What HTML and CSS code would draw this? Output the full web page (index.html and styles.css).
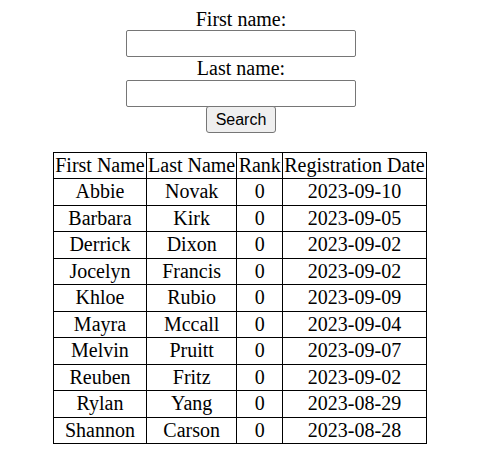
FILE: index.html
```html
<!DOCTYPE html>
<html>
<head>
<meta charset="utf-8">
<link rel="stylesheet" href="styles.css">
</head>
<body>
<form class="search-form">
  <label class="field-label" for="first">First name:</label>
  <input class="field-input" id="first" type="text">
  <label class="field-label" for="last">Last name:</label>
  <input class="field-input" id="last" type="text">
  <button class="search-btn" type="button">Search</button>
</form>
<table class="results">
  <tr><td>First Name</td><td>Last Name</td><td>Rank</td><td>Registration Date</td></tr>
  <tr><td>Abbie</td><td>Novak</td><td>0</td><td>2023-09-10</td></tr>
  <tr><td>Barbara</td><td>Kirk</td><td>0</td><td>2023-09-05</td></tr>
  <tr><td>Derrick</td><td>Dixon</td><td>0</td><td>2023-09-02</td></tr>
  <tr><td>Jocelyn</td><td>Francis</td><td>0</td><td>2023-09-02</td></tr>
  <tr><td>Khloe</td><td>Rubio</td><td>0</td><td>2023-09-09</td></tr>
  <tr><td>Mayra</td><td>Mccall</td><td>0</td><td>2023-09-04</td></tr>
  <tr><td>Melvin</td><td>Pruitt</td><td>0</td><td>2023-09-07</td></tr>
  <tr><td>Reuben</td><td>Fritz</td><td>0</td><td>2023-09-02</td></tr>
  <tr><td>Rylan</td><td>Yang</td><td>0</td><td>2023-08-29</td></tr>
  <tr><td>Shannon</td><td>Carson</td><td>0</td><td>2023-08-28</td></tr>
</table>
</body>
</html>
```
FILE: styles.css
```css
html, body {
  background: #fff;
}
body {
  margin: 8px;
  font-family: "Liberation Serif", "Times New Roman", serif;
  font-size: 20px;
  color: #000;
}
.search-form {
  display: flex;
  flex-direction: column;
  align-items: center;
  margin: 0 0 19px;
  padding-left: 2px;
}
.field-label {
  display: block;
  line-height: 22px;
  height: 22px;
}
.field-input {
  box-sizing: border-box;
  width: 230px;
  height: 27px;
  border: 1px solid #767676;
  border-radius: 2px;
  background: #fff;
  padding: 1px 2px;
  font-family: "Liberation Sans", Arial, sans-serif;
  font-size: 16px;
}
.field-input + .field-label {
  line-height: 23px;
  height: 23px;
}
.search-btn {
  box-sizing: border-box;
  width: 70px;
  height: 27px;
  margin-top: -1px;
  background: #efefef;
  border: 1px solid #767676;
  border-radius: 3px;
  padding: 0 6px;
  font-family: "Liberation Sans", Arial, sans-serif;
  font-size: 16px;
  color: #000;
}
.results {
  border-collapse: collapse;
  margin: 0 auto;
}
.results td {
  border: 1px solid #000;
  padding: 1px 1.2px;
  text-align: center;
  line-height: 23.45px;
}
```
